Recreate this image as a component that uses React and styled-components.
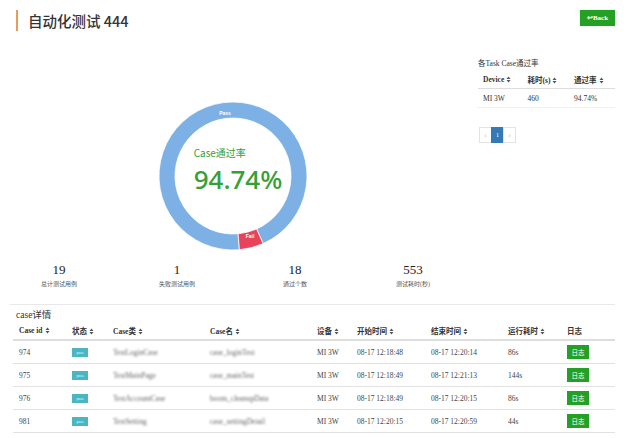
import React from "react";
import styled, { createGlobalStyle } from "styled-components";

const GlobalStyle = createGlobalStyle`
  body {
    margin: 0;
    background: #fff;
    color: #333;
    font-family: "Liberation Serif", "Noto Sans CJK SC", serif;
  }
`;

const green = "#24a024";

const Page = styled.div`
  width: 628px;
  height: 438px;
  overflow: hidden;
  box-sizing: border-box;
`;

const Header = styled.div`
  display: flex;
  justify-content: space-between;
  align-items: flex-start;
  height: 36px;
  padding: 10px 13px 0 16px;
  box-sizing: border-box;
`;

const Title = styled.div`
  border-left: 2px solid #e89b5a;
  padding-left: 10px;
  height: 21px;
  line-height: 21px;
  font-family: "Noto Sans CJK SC", "Noto Sans", sans-serif;
  font-size: 14.5px;
  font-weight: 500;
  color: #333;
`;

const BackButton = styled.button`
  width: 35px;
  height: 16px;
  padding: 0;
  border: none;
  background: ${green};
  color: #fff;
  font-family: "Liberation Serif", serif;
  font-size: 7px;
  font-weight: bold;
  box-shadow: 0 0 2px rgba(0, 0, 0, 0.15);
`;

const Top = styled.div`
  display: flex;
  height: 222px;
`;

const ChartCol = styled.div`
  width: 466px;
  display: flex;
  justify-content: center;
  padding-top: 66px;
  box-sizing: border-box;
`;

const Donut = styled.div`
  position: relative;
  width: 148px;
  height: 148px;
`;

const Center = styled.div`
  position: absolute;
  inset: 0;
  display: flex;
  align-items: center;
  justify-content: center;
`;

const CenterBlock = styled.div`
  padding-left: 10px;
  margin-bottom: 10px;
  color: #35a035;
  font-family: "Noto Sans", "Noto Sans CJK SC", sans-serif;
`;

const Rate = styled.div`
  font-size: 10px;
  line-height: 16px;
  font-family: "Noto Sans CJK SC", sans-serif;
`;

const RateBig = styled.div`
  font-size: 26px;
  line-height: 36px;
  font-weight: 500;
`;

const SliceLabel = styled.text`
  fill: #fff;
  font-size: 5px;
  font-weight: bold;
  font-family: "Liberation Sans", sans-serif;
`;

const RightPanel = styled.div`
  width: 137px;
  padding-top: 22px;
  margin-left: 12px;
`;

const PanelCaption = styled.div`
  font-size: 7.5px;
  line-height: 12px;
`;

const SmallTable = styled.table`
  width: 137px;
  border-collapse: collapse;
  font-size: 7.5px;

  th {
    text-align: left;
    font-weight: bold;
    height: 18px;
    padding: 0 5px;
    border-bottom: 1.5px solid #ddd;
  }
  td {
    height: 18px;
    padding: 0 5px;
    border-bottom: 1px solid #f0f0f0;
  }
`;

const Pager = styled.div`
  display: flex;
  margin-top: 19px;
  margin-left: 2px;
`;

const PageBox = styled.div`
  width: 11px;
  height: 14px;
  line-height: 14px;
  text-align: center;
  font-size: 6px;
  border: 1px solid ${(p) => (p.active ? "#337ab7" : "#e3e3e3")};
  background: ${(p) => (p.active ? "#337ab7" : "#fff")};
  color: ${(p) => (p.active ? "#fff" : "#999")};
  margin-left: -1px;
`;

const Stats = styled.div`
  display: grid;
  grid-template-columns: repeat(4, 118px);
  padding-top: 5px;
`;

const Stat = styled.div`
  text-align: center;
`;

const StatNum = styled.div`
  font-size: 13px;
  line-height: 14px;
  color: #222;
`;

const StatLabel = styled.div`
  font-size: 6px;
  line-height: 10px;
  margin-top: 2px;
  color: #555;
`;

const Divider = styled.div`
  margin: 15px 13px 0 10px;
  border-top: 1px solid #e8e8e8;
`;

const CaseTitle = styled.div`
  font-size: 9.5px;
  line-height: 12px;
  padding-left: 16px;
  margin-top: 4px;
`;

const CaseTable = styled.table`
  margin-left: 13px;
  width: 602px;
  table-layout: fixed;
  border-collapse: collapse;

  th {
    text-align: left;
    font-size: 7.5px;
    font-weight: bold;
    height: 18px;
    padding: 0 6px;
    border-bottom: 2px solid #ddd;
  }
  td {
    font-size: 7.5px;
    height: 22px;
    padding: 0 6px;
    border-bottom: 1px solid #e2e2e2;
    color: #444;
    white-space: nowrap;
  }
`;

const Badge = styled.span`
  display: inline-block;
  width: 16px;
  height: 9px;
  line-height: 9px;
  background: #4bb6c2;
  color: #dff;
  font-size: 4px;
  text-align: center;
  vertical-align: middle;
`;

const Blurred = styled.span`
  color: #666;
  filter: blur(0.9px);
`;

const LogButton = styled.button`
  width: 22px;
  height: 14px;
  padding: 0;
  border: none;
  background: ${green};
  color: #fff;
  font-size: 6.5px;
  font-family: "Noto Sans CJK SC", sans-serif;
  vertical-align: middle;
`;

const SortIcon = () => (
  <svg width="5" height="7" viewBox="0 0 5 7" style={{ marginLeft: 2, verticalAlign: "-1px" }}>
    <path d="M0.5 3 L2.5 0.5 L4.5 3 Z M0.5 4 L2.5 6.5 L4.5 4 Z" fill="#555" />
  </svg>
);

const arc = (cx, cy, R, r, a0, a1) => {
  const pt = (rad, a) => {
    const t = (a * Math.PI) / 180;
    return `${cx + rad * Math.sin(t)} ${cy - rad * Math.cos(t)}`;
  };
  const large = a1 - a0 > 180 ? 1 : 0;
  return `M${pt(R, a0)} A${R} ${R} 0 ${large} 1 ${pt(R, a1)} L${pt(r, a1)} A${r} ${r} 0 ${large} 0 ${pt(r, a0)} Z`;
};

const cols = [53, 41, 97, 107, 40, 74, 77, 59, 54];
const heads = ["Case id", "状态", "Case类", "Case名", "设备", "开始时间", "结束时间", "运行耗时", "日志"];

const rows = [
  { id: 974, cls: "TestLoginCase", name: "case_loginTest", start: "08-17 12:18:48", end: "08-17 12:20:14", cost: "86s" },
  { id: 975, cls: "TestMainPage", name: "case_mainTest", start: "08-17 12:18:49", end: "08-17 12:21:13", cost: "144s" },
  { id: 976, cls: "TestAccountCase", name: "boom_cleanupData", start: "08-17 12:18:49", end: "08-17 12:20:15", cost: "86s" },
  { id: 981, cls: "TestSetting", name: "case_settingDetail", start: "08-17 12:20:15", end: "08-17 12:20:59", cost: "44s" },
];

const stats = [
  ["19", "总计测试用例"],
  ["1", "失败测试用例"],
  ["18", "通过个数"],
  ["553", "测试耗时(秒)"],
];

export default function App() {
  return (
    <Page>
      <GlobalStyle />
      <Header>
        <Title>自动化测试 444</Title>
        <BackButton>↩Back</BackButton>
      </Header>
      <Top>
        <ChartCol>
          <Donut>
            <svg width="148" height="148" viewBox="0 0 148 148">
              <path d={arc(74, 74, 74, 58, 175, 516)} fill="#7db1e6" stroke="#fff" strokeWidth="0.8" />
              <path d={arc(74, 74, 74, 58, 156, 175)} fill="#e8435a" stroke="#fff" strokeWidth="0.8" />
              <SliceLabel x="66" y="12.5" textAnchor="middle">Pass</SliceLabel>
              <SliceLabel x="91" y="136" textAnchor="middle">Fail</SliceLabel>
            </svg>
            <Center>
              <CenterBlock>
                <Rate>Case通过率</Rate>
                <RateBig>94.74%</RateBig>
              </CenterBlock>
            </Center>
          </Donut>
        </ChartCol>
        <RightPanel>
          <PanelCaption>各Task Case通过率</PanelCaption>
          <SmallTable>
            <thead>
              <tr>
                <th>Device<SortIcon /></th>
                <th>耗时(s)<SortIcon /></th>
                <th>通过率<SortIcon /></th>
              </tr>
            </thead>
            <tbody>
              <tr>
                <td>MI 3W</td>
                <td>460</td>
                <td>94.74%</td>
              </tr>
            </tbody>
          </SmallTable>
          <Pager>
            <PageBox>‹</PageBox>
            <PageBox active>1</PageBox>
            <PageBox>›</PageBox>
          </Pager>
        </RightPanel>
      </Top>
      <Stats>
        {stats.map(([n, l]) => (
          <Stat key={l}>
            <StatNum>{n}</StatNum>
            <StatLabel>{l}</StatLabel>
          </Stat>
        ))}
      </Stats>
      <Divider />
      <CaseTitle>case详情</CaseTitle>
      <CaseTable>
        <colgroup>
          {cols.map((w, i) => (
            <col key={i} style={{ width: w }} />
          ))}
        </colgroup>
        <thead>
          <tr>
            {heads.map((h, i) => (
              <th key={h}>
                {h}
                {i < heads.length - 1 && <SortIcon />}
              </th>
            ))}
          </tr>
        </thead>
        <tbody>
          {rows.map((r) => (
            <tr key={r.id}>
              <td>{r.id}</td>
              <td>
                <Badge>pass</Badge>
              </td>
              <td>
                <Blurred>{r.cls}</Blurred>
              </td>
              <td>
                <Blurred>{r.name}</Blurred>
              </td>
              <td>MI 3W</td>
              <td>{r.start}</td>
              <td>{r.end}</td>
              <td>{r.cost}</td>
              <td>
                <LogButton>日志</LogButton>
              </td>
            </tr>
          ))}
        </tbody>
      </CaseTable>
    </Page>
  );
}
